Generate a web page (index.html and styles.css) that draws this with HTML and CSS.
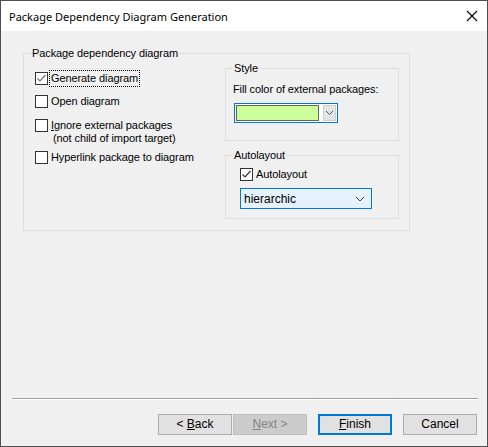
FILE: index.html
```html
<!DOCTYPE html>
<html>
<head>
<meta charset="utf-8">
<link rel="stylesheet" href="styles.css">
</head>
<body>
<div class="window">
  <div class="titlebar">
    <span class="title">Package Dependency Diagram Generation</span>
    <svg class="close" width="12" height="12" viewBox="0 0 12 12"><path d="M1 1 L11 11 M11 1 L1 11" stroke="#000" stroke-width="1.1" fill="none"/></svg>
  </div>
  <div class="main">
    <fieldset class="group outer">
      <legend>Package dependency diagram</legend>
      <div class="columns">
        <div class="left">
          <div class="check r1"><span class="box"><svg width="11" height="11" viewBox="0 0 11 11"><path d="M1.5 5.5 L4 8 L9.5 2" stroke="#707070" stroke-width="1.2" fill="none"/></svg></span><span class="lbl focus">Generate diagram</span></div>
          <div class="check r2"><span class="box"></span><span class="lbl">Open diagram</span></div>
          <div class="check r3"><span class="box"></span><span class="lbl"><u>I</u>gnore external packages<br><span class="indent">(not child of import target)</span></span></div>
          <div class="check r4"><span class="box"></span><span class="lbl">Hyperlink package to diagram</span></div>
        </div>
        <div class="right">
          <fieldset class="group style">
            <legend>Style</legend>
            <div class="fill-label">Fill color of external packages:</div>
            <div class="color-combo">
              <span class="swatch"></span>
              <span class="drop"><svg width="9" height="6" viewBox="0 0 9 6"><path d="M1 1 L4.5 4.5 L8 1" stroke="#555" stroke-width="1" fill="none"/></svg></span>
            </div>
          </fieldset>
          <fieldset class="group auto">
            <legend>Autolayout</legend>
            <div class="check auto-check"><span class="box"><svg width="11" height="11" viewBox="0 0 11 11"><path d="M1.5 5.5 L4 8 L9.5 2" stroke="#333" stroke-width="1.2" fill="none"/></svg></span><span class="lbl">Autolayout</span></div>
            <div class="select">
              <span>hierarchic</span>
              <svg width="10" height="6" viewBox="0 0 10 6"><path d="M1 1 L5 5 L9 1" stroke="#444" stroke-width="1" fill="none"/></svg>
            </div>
          </fieldset>
        </div>
      </div>
    </fieldset>
  </div>
  <div class="footer">
    <div class="separator"></div>
    <div class="buttons">
      <button class="btn back">&lt; <u>B</u>ack</button>
      <button class="btn next" disabled><u>N</u>ext &gt;</button>
      <button class="btn finish"><u>F</u>inish</button>
      <button class="btn cancel">Cancel</button>
    </div>
  </div>
</div>
</body>
</html>
```

FILE: styles.css
```css
html, body {
  margin: 0;
  padding: 0;
  background: #f0f0f0;
}
.window {
  width: 488px;
  height: 447px;
  box-sizing: border-box;
  border: 1px solid #4f4f4f;
  background: #f0f0f0;
  display: flex;
  flex-direction: column;
  font-family: "Liberation Sans", Arial, sans-serif;
  font-size: 11px;
  letter-spacing: -0.1px;
  color: #000;
}
.titlebar {
  height: 30px;
  background: #fff;
  display: flex;
  align-items: center;
  justify-content: space-between;
  padding: 0 9px 0 8px;
  flex: none;
}
.title {
  font-family: "Noto Sans", "Liberation Sans", sans-serif;
  font-size: 11px;
  letter-spacing: 0;
  color: #000;
}
.close {
  display: block;
}
.main {
  flex: 1;
  padding: 16px 0 0 22px;
}
.group {
  margin: 0;
  padding: 0;
  border: 1px solid #dcdcdc;
  box-sizing: border-box;
  min-width: 0;
}
.group legend {
  padding: 0 1px;
  margin-left: 7px;
  line-height: 13px;
  height: 13px;
}
.outer {
  width: 387px;
  height: 184px;
}
.columns {
  display: flex;
}
.left {
  width: 201px;
  box-sizing: border-box;
  padding: 12px 0 0 11px;
}
.check {
  display: flex;
  align-items: flex-start;
  line-height: 13px;
}
.box {
  width: 13px;
  height: 13px;
  box-sizing: border-box;
  border: 1px solid #333;
  background: #fff;
  flex: none;
  display: flex;
  align-items: center;
  justify-content: center;
}
.box svg { display: block; }
.lbl {
  margin-left: 3px;
}
.focus {
  outline: 1px dotted #000;
  outline-offset: 1px;
  margin-left: 3px;
}
.indent {
  padding-left: 2px;
}
.r2 { margin-top: 10px; }
.r3 { margin-top: 11px; }
.r4 { margin-top: 6px; }
.right {
  width: 174px;
  padding-top: 2px;
}
.style {
  width: 174px;
  height: 79px;
}
.fill-label {
  margin: 8px 0 0 7px;
  line-height: 13px;
}
.color-combo {
  margin: 7px 0 0 8px;
  width: 104px;
  height: 20px;
  box-sizing: border-box;
  border: 1px solid #0078d7;
  background: #fff;
  display: flex;
  align-items: center;
  padding: 0 1px;
}
.swatch {
  width: 83px;
  height: 16px;
  box-sizing: border-box;
  border: 1px solid #646464;
  background: #ccff99;
}
.drop {
  margin-left: 4px;
  width: 13px;
  height: 16px;
  box-sizing: border-box;
  border: 1px solid #cfcfcf;
  background: #e3e3e3;
  display: flex;
  align-items: center;
  justify-content: center;
}
.auto {
  margin-top: 8px;
  width: 174px;
  height: 70px;
}
.auto-check {
  margin: 6px 0 0 14px;
}
.auto-check .lbl { margin-left: 3px; }
.select {
  margin: 7px 0 0 14px;
  width: 132px;
  height: 21px;
  box-sizing: border-box;
  border: 1px solid #0078d7;
  background: #e5f1fb;
  display: flex;
  align-items: center;
  justify-content: space-between;
  padding: 0 6px 0 3px;
  font-size: 12px;
  letter-spacing: 0;
}
.select svg { display: block; }
.footer {
  flex: none;
  padding-bottom: 11px;
}
.separator {
  margin-left: 11px;
  width: 466px;
  height: 1px;
  border-top: 1px solid #a0a0a0;
  background: #fff;
}
.buttons {
  display: flex;
  justify-content: flex-end;
  padding-right: 10px;
  margin-top: 14px;
}
.btn {
  width: 74px;
  height: 21px;
  box-sizing: border-box;
  margin: 0 0 0 11px;
  padding: 0;
  border: 1px solid #adadad;
  background: #e1e1e1;
  font-family: "Liberation Sans", Arial, sans-serif;
  font-size: 12px;
  color: #000;
  line-height: 17px;
}
.next {
  margin-left: 1px;
  background: #cccccc;
  border-color: #bfbfbf;
  color: #838383;
}
.finish {
  border: 2px solid #0078d7;
}
```
